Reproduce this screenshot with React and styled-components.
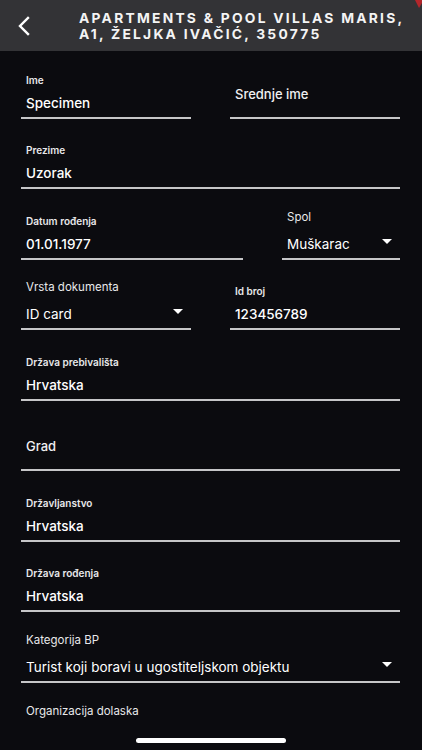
import styled, { createGlobalStyle } from "styled-components";

const GlobalStyle = createGlobalStyle`
  html, body {
    margin: 0;
    padding: 0;
    background: #0b0b0f;
  }
  body {
    font-family: Inter, "Noto Sans", "Liberation Sans", sans-serif;
    color: #fff;
  }
`;

const Screen = styled.div`
  position: relative;
  width: 422px;
  height: 750px;
  overflow: hidden;
  background: #0b0b0f;
`;

const Header = styled.header`
  display: flex;
  align-items: center;
  height: 51px;
  background: #333336;
  padding: 0 0 0 14px;
  box-sizing: border-box;
`;

const BackButton = styled.button`
  display: flex;
  align-items: center;
  justify-content: center;
  width: 20px;
  height: 24px;
  margin-right: 45px;
  padding: 0;
  background: none;
  border: none;
  color: #fff;
`;

const Title = styled.h1`
  margin: 0;
  font-size: 13.8px;
  line-height: 16px;
  font-weight: 700;
  letter-spacing: 2.25px;
  text-transform: uppercase;
  color: #f4f4f4;
  white-space: nowrap;
`;

const Corner = styled.svg`
  position: absolute;
  top: 0;
  right: 0;
`;

const Form = styled.div`
  display: flex;
  flex-direction: column;
  gap: 14.5px;
  padding: 11.5px 22px 0 21px;
`;

const Row = styled.div`
  display: grid;
  grid-template-columns: ${(p) => p.$cols || "1fr"};
  column-gap: 39px;
`;

const Field = styled.div`
  position: relative;
  display: flex;
  flex-direction: column;
  justify-content: ${(p) => (p.$open ? "flex-start" : "flex-end")};
  height: 56px;
  box-sizing: border-box;
  padding: ${(p) => (p.$open ? "7.5px" : "0")}
    ${(p) => (p.$select ? "30px" : "6px")}
    ${(p) => (p.$hint ? "15px" : "5px")} 5px;
  border-bottom: ${(p) => (p.$open ? "0" : "2px solid #c6c6c8")};
`;

const Label = styled.span`
  font-size: ${(p) => (p.$plain ? "11.5px" : "10px")};
  line-height: 12px;
  font-weight: ${(p) => (p.$plain ? 400 : 600)};
  color: #e8e8ea;
  margin-bottom: ${(p) => (p.$plain ? "12px" : "8px")};
  white-space: nowrap;
`;

const Value = styled.span`
  font-size: 13.5px;
  line-height: 18px;
  font-weight: ${(p) => (p.$plain ? 400 : 500)};
  color: #fff;
  white-space: nowrap;
`;

const Hint = styled.span`
  font-size: 13px;
  line-height: 16px;
  font-weight: 500;
  color: #f0f0f2;
`;

const Caret = styled.span`
  position: absolute;
  right: 8px;
  bottom: 14px;
  width: 0;
  height: 0;
  border-left: 5.5px solid transparent;
  border-right: 5.5px solid transparent;
  border-top: 5.5px solid #fff;
`;

const HomeBar = styled.div`
  position: absolute;
  left: 136px;
  bottom: 7px;
  width: 150px;
  height: 5px;
  border-radius: 3px;
  background: #fff;
`;

function TextField({ label, value, hint, plain, select, open }) {
  return (
    <Field $hint={hint} $select={select} $open={open}>
      {hint ? (
        <Hint>{hint}</Hint>
      ) : (
        <>
          <Label $plain={plain}>{label}</Label>
          {value && <Value $plain={plain}>{value}</Value>}
        </>
      )}
      {select && <Caret />}
    </Field>
  );
}

export default function App() {
  return (
    <>
      <GlobalStyle />
      <Screen>
        <Header>
          <BackButton aria-label="Natrag">
            <svg width="14" height="20" viewBox="0 0 14 20">
              <path
                d="M11 2 L3 10 L11 18"
                fill="none"
                stroke="#fff"
                strokeWidth="2.4"
                strokeLinecap="square"
              />
            </svg>
          </BackButton>
          <Title>
            Apartments &amp; Pool Villas Maris,
            <br />
            A1, Željka Ivačić, 350775
          </Title>
        </Header>
        <Corner width="12" height="8" viewBox="0 0 12 8">
          <polygon points="5,0 12,0 12,3 9,8" fill="#b3262b" />
        </Corner>

        <Form>
          <Row $cols="170px 170px">
            <TextField label="Ime" value="Specimen" />
            <TextField hint="Srednje ime" />
          </Row>
          <TextField label="Prezime" value="Uzorak" />
          <Row $cols="222px 118px">
            <TextField label="Datum rođenja" value="01.01.1977" />
            <TextField label="Spol" value="Muškarac" plain select />
          </Row>
          <Row $cols="170px 170px">
            <TextField label="Vrsta dokumenta" value="ID card" plain select />
            <TextField label="Id broj" value="123456789" />
          </Row>
          <TextField label="Država prebivališta" value="Hrvatska" />
          <TextField hint="Grad" />
          <TextField label="Državljanstvo" value="Hrvatska" />
          <TextField label="Država rođenja" value="Hrvatska" />
          <TextField
            label="Kategorija BP"
            value="Turist koji boravi u ugostiteljskom objektu"
            plain
            select
          />
          <TextField label="Organizacija dolaska" plain open />
        </Form>
        <HomeBar />
      </Screen>
    </>
  );
}
